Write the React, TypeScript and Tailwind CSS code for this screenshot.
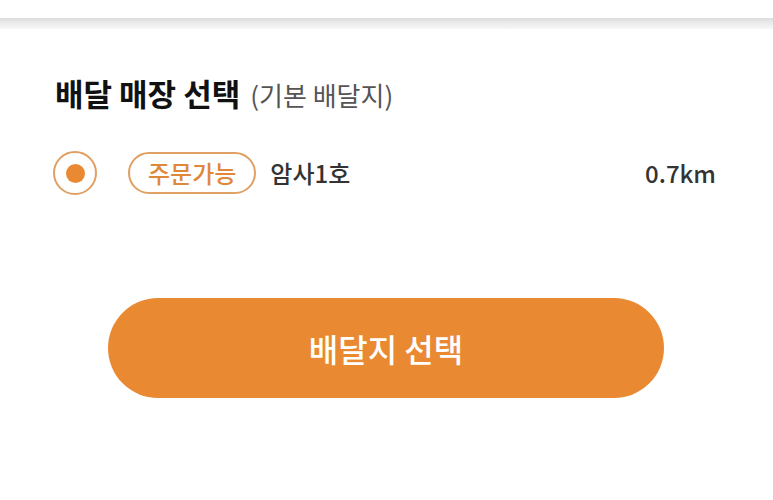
export default function App() {
  return (
    <div
      className="h-[500px] w-[773px] overflow-hidden bg-white"
      style={{ fontFamily: '"Noto Sans CJK KR", "Noto Sans", sans-serif' }}
    >
      <div className="h-[18px] bg-white" />
      <div className="h-[11px] bg-gradient-to-b from-[#dcdcdc] via-[#ececec] to-[#f7f7f7]" />

      <section className="pl-[53px] pr-[57px] pt-[48px]">
        <h2 className="ml-[2px] flex h-[31px] items-baseline gap-[10px] text-[31px] font-bold leading-none text-[#111]">
          배달 매장 선택
          <span className="text-[26px] font-normal text-[#555]">(기본 배달지)</span>
        </h2>

        <div className="mt-[43px] flex items-center">
          <span className="flex h-[44px] w-[44px] items-center justify-center rounded-full border-2 border-[#e0a063]">
            <span className="h-[19px] w-[19px] rounded-full bg-[#e98a33]" />
          </span>
          <span className="ml-[31px] flex h-[42px] items-center rounded-full border-2 border-[#e0a063] px-[18px] text-[24px] font-medium text-[#e0883a]">
            주문가능
          </span>
          <span className="ml-[14px] text-[24px] font-medium text-[#333]">암사1호</span>
          <span className="ml-auto text-[24px] font-medium text-[#333]">0.7km</span>
        </div>
      </section>

      <div className="flex justify-center pt-[103px]">
        <button className="ml-[-1px] flex h-[100px] w-[556px] items-center justify-center rounded-full bg-[#e98a33] text-[32px] font-medium text-white">
          배달지 선택
        </button>
      </div>
    </div>
  );
}
